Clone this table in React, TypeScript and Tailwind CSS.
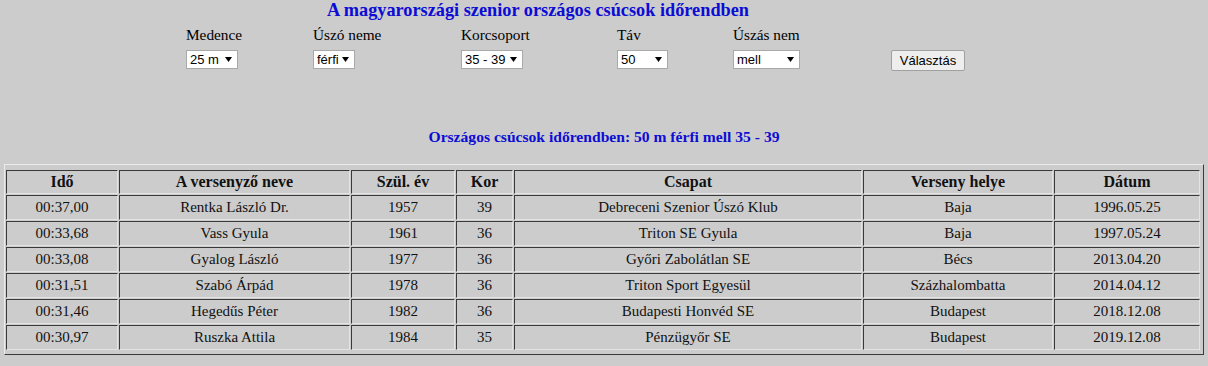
import React from "react";

const rows: string[][] = [
  ["00:37,00", "Rentka László Dr.", "1957", "39", "Debreceni Szenior Úszó Klub", "Baja", "1996.05.25"],
  ["00:33,68", "Vass Gyula", "1961", "36", "Triton SE Gyula", "Baja", "1997.05.24"],
  ["00:33,08", "Gyalog László", "1977", "36", "Győri Zabolátlan SE", "Bécs", "2013.04.20"],
  ["00:31,51", "Szabó Árpád", "1978", "36", "Triton Sport Egyesül", "Százhalombatta", "2014.04.12"],
  ["00:31,46", "Hegedűs Péter", "1982", "36", "Budapesti Honvéd SE", "Budapest", "2018.12.08"],
  ["00:30,97", "Ruszka Attila", "1984", "35", "Pénzügyőr SE", "Budapest", "2019.12.08"],
];

const headers = ["Idő", "A versenyző neve", "Szül. év", "Kor", "Csapat", "Verseny helye", "Dátum"];

function Arrow() {
  return (
    <svg width="7" height="5" viewBox="0 0 7 5" className="shrink-0">
      <path d="M0 0 H7 L3.5 5 Z" fill="#000" />
    </svg>
  );
}

function Sel({ value, className }: { value: string; className: string }) {
  return (
    <div
      className={
        "flex h-[19px] items-center justify-between border border-[#a9a9a9] bg-white pl-[3px] pr-[5px] font-['Liberation_Sans',Arial,sans-serif] text-[13px] leading-none text-black " +
        className
      }
    >
      <span>{value}</span>
      <Arrow />
    </div>
  );
}

function Cell({ children, head }: { children: React.ReactNode; head?: boolean }) {
  return (
    <div
      className={
        "flex items-center justify-center border border-t-[#3a3a3a] border-l-[#3a3a3a] border-b-[#e4e4e4] border-r-[#e4e4e4] leading-none text-[#111111] " +
        (head ? "text-[16px] font-bold" : "text-[15px]")
      }
    >
      {children}
    </div>
  );
}

export default function App() {
  return (
    <div className="h-[366px] w-[1208px] overflow-hidden bg-[#cccccc] font-['Liberation_Serif','Times_New_Roman',serif]">
      <div className="h-[21px] pl-[327px] text-[18.3px] font-bold leading-[21px] text-[#0c0cd4]">
        A magyarországi szenior országos csúcsok időrendben
      </div>

      <div className="ml-[186px] mt-[5px] grid grid-cols-[127px_148px_156px_116px_158px_auto] grid-rows-[18px_auto] gap-y-[6px] text-[15.3px] leading-[18px] text-black">
        <div>Medence</div>
        <div>Úszó neme</div>
        <div>Korcsoport</div>
        <div>Táv</div>
        <div>Úszás nem</div>
        <div></div>
        <div className="flex items-start">
          <Sel value="25 m" className="w-[52px]" />
        </div>
        <div className="flex items-start">
          <Sel value="férfi" className="w-[42px]" />
        </div>
        <div className="flex items-start">
          <Sel value="35 - 39" className="w-[62px]" />
        </div>
        <div className="flex items-start">
          <Sel value="50" className="w-[51px]" />
        </div>
        <div className="flex items-start">
          <Sel value="mell" className="w-[67px]" />
        </div>
        <div className="flex items-start">
          <div className="flex h-[21px] w-[74px] items-center justify-center rounded-[2px] border border-[#a0a0a0] bg-[#eeeeee] font-['Liberation_Sans',Arial,sans-serif] text-[13px] leading-none text-black">
            Választás
          </div>
        </div>
      </div>

      <div className="mt-[57px] h-[18px] text-center text-[15.6px] font-bold leading-[18px] text-[#0c0cd4]">
        Országos csúcsok időrendben: 50 m férfi mell 35 - 39
      </div>

      <div className="ml-[4px] mt-[18px] w-[1200px] border border-t-[#ececec] border-l-[#ececec] border-b-[#3a3a3a] border-r-[#3a3a3a] pb-[4px] pl-[1px] pr-[3px] pt-[5px]">
        <div className="grid grid-cols-[112px_231px_104px_57px_348px_190px_146px] grid-rows-[24px_repeat(6,25px)] gap-[1px]">
          {headers.map((h) => (
            <Cell key={h} head>
              {h}
            </Cell>
          ))}
          {rows.map((r, i) =>
            r.map((c, j) => <Cell key={i + "-" + j}>{c}</Cell>)
          )}
        </div>
      </div>
    </div>
  );
}
